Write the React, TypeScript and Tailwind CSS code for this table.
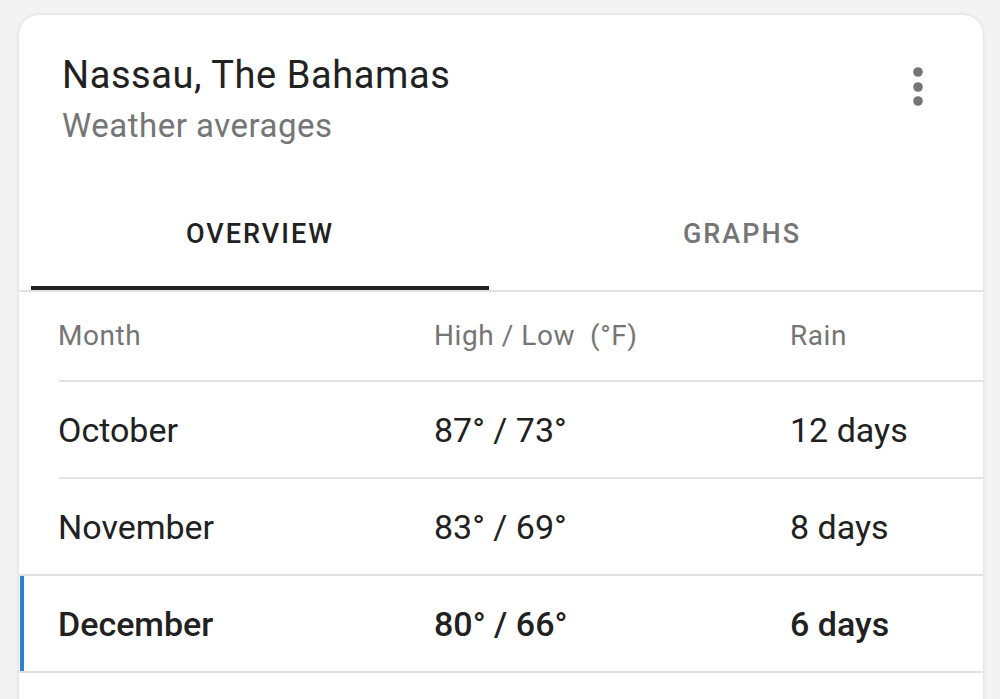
const rows = [
  { month: "October", temps: "87° / 73°", rain: "12 days" },
  { month: "November", temps: "83° / 69°", rain: "8 days" },
  { month: "December", temps: "80° / 66°", rain: "6 days", current: true },
];

const font = { fontFamily: "Roboto, 'Noto Sans', Arial, sans-serif" };

const App = () => {
  return (
    <div className="h-[699px] w-[1000px] overflow-hidden bg-[#f3f3f3] pl-[19px] pt-[15px]" style={font}>
      <div className="relative min-h-[700px] w-[964px] rounded-t-[20px] bg-white shadow-[0_0_4px_rgba(0,0,0,0.12)]">
        {/* header */}
        <div className="pl-[43px] pt-[38px]">
          <h1 className="text-[38px] leading-[44px] tracking-[0.015em] text-[#212121]">Nassau, The Bahamas</h1>
          <p className="mt-[9px] text-[33px] leading-[40px] tracking-[0.015em] text-[#757575]">Weather averages</p>
        </div>
        <button type="button" className="absolute right-[55px] top-[50px] h-[44px] w-[20px]">
          <svg viewBox="0 0 20 44" className="h-full w-full" fill="#757575">
            <circle cx="10" cy="7" r="4.8" />
            <circle cx="10" cy="22" r="4.8" />
            <circle cx="10" cy="36" r="4.8" />
          </svg>
        </button>

        {/* tabs */}
        <div className="mt-[70px] flex border-b-2 border-[#e2e2e2] pl-[12px]">
          <div className="flex w-[458px] flex-col items-center">
            <span className="text-[27px] font-medium leading-[36px] tracking-[0.075em] text-[#212121]">OVERVIEW</span>
            <div className="mt-[34px] h-[4px] w-full bg-[#212121]" />
          </div>
          <div className="flex flex-1 flex-col items-center pl-[12px]">
            <span className="text-[27px] font-medium leading-[36px] tracking-[0.075em] text-[#757575]">GRAPHS</span>
          </div>
        </div>

        {/* table header */}
        <div className="flex h-[88px] items-center pl-[39px] text-[28px] leading-[36px] tracking-[0.02em] text-[#757575]">
          <span className="w-[376px]">Month</span>
          <span className="w-[356px]">High / Low&nbsp;&nbsp;(°F)</span>
          <span>Rain</span>
        </div>
        <div className="ml-[40px] h-[2px] bg-[#e2e2e2]" />

        {rows.map((row, i) => {
          const nextCurrent = rows[i + 1]?.current;
          return (
            <div key={row.month}>
              <div
                className={
                  row.current
                    ? "ml-[1px] flex h-[95px] items-center border-l-[4px] border-[#2f80c8] pl-[34px] text-[34px] font-medium leading-[40px] text-[#212121]"
                    : "flex h-[95px] items-center pl-[39px] text-[34px] leading-[40px] text-[#212121]"
                }
              >
                <span className="w-[376px]">{row.month}</span>
                <span className="w-[356px]">{row.temps}</span>
                <span>{row.rain}</span>
              </div>
              <div className={row.current || nextCurrent ? "h-[2px] bg-[#e2e2e2]" : "ml-[40px] h-[2px] bg-[#e2e2e2]"} />
            </div>
          );
        })}
      </div>
    </div>
  );
};

export default App;
